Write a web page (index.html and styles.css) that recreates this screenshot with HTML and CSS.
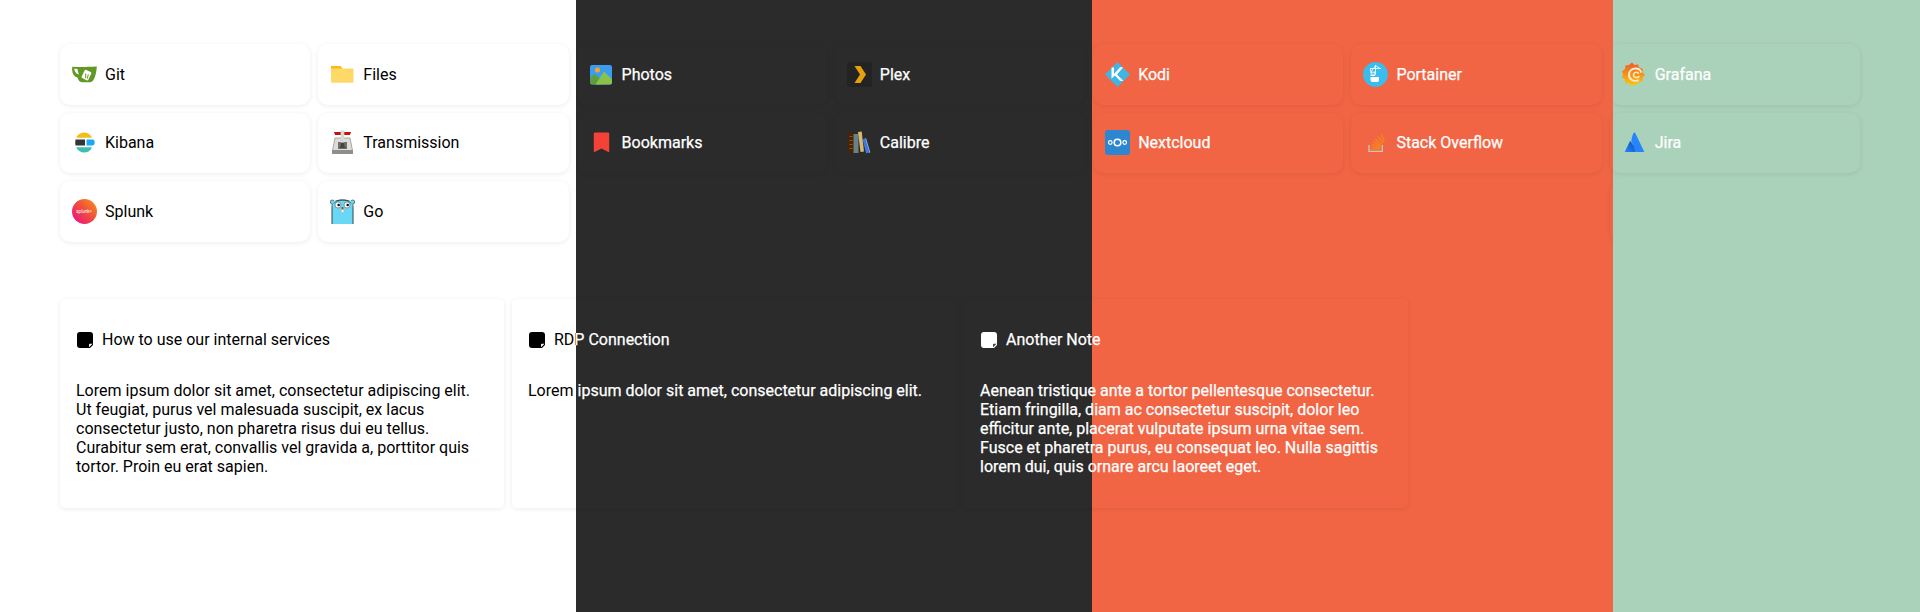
FILE: index.html
```html
<!DOCTYPE html>
<html lang="en">
<head>
<meta charset="utf-8">
<title>Dashboard themes</title>
<link rel="stylesheet" href="styles.css">
</head>
<body>
<main class="stripes">

<section class="stripe stripe-light">
  <div class="sheet">
    <div class="apps">
      <a class="app col-1"><svg class="app-icon" viewBox="0 0 25 25"><path fill="#609926" d="M.3 4.700c6 .5 13 .4 24.400-.1.300 0-.5 10.900-4 14.300-.9.900-2 1.300-3.300 1.300h-7c-2 0-3.400-1-4.300-2.900-.3-.6-.5-1.100-.7-1.700C2.500 14.700.5 12.500.2 8.500.1 7.100.1 5.600.3 4.700z"/><path fill="#fff" d="M2.200 6.700c1.200 0 2.300.1 3.300.2.300 2 .8 4 1.400 5.700C4.500 12 2.700 9.800 2.200 6.700z"/><path fill="#fff" d="m14.300 8 4.300 2.100c.7.300.9 1 .6 1.600l-2.900 6c-.3.600-1 .9-1.700.5L10.300 16c-.6-.3-.9-1-.6-1.600l2.900-5.900c.3-.6 1-.8 1.700-.5z"/><path fill="#609926" d="M13.200 11.500h1v4.800h-1zm2.600.8h1l-.9 4.300h-1z"/></svg><span>Git</span></a>
      <a class="app"><svg class="app-icon" viewBox="0 0 25 25"><path fill="#ffb912" d="M1 4h9.500L12 5.700v2H1z"/><path fill="#ffd968" d="M1 6.500h22.500v13.700a.6.600 0 0 1-.5.500H1.500a.6.600 0 0 1-.5-.5z"/></svg><span>Files</span></a>
      <a class="app col-1"><svg class="app-icon" viewBox="0 0 25 25"><path fill="#f0bf1a" d="M4.200 7.800C5.500 4.600 8.500 2.500 12.300 2.500c3 0 5.800 1.600 7.300 4.300.2.400.1 1-.5 1z"/><path fill="#353535" d="M3.500 9.500H13v6H3.500C3.100 13.500 3.100 11.500 3.500 9.500z"/><path fill="#3ebeb0" d="M4.200 17.200h15c.6 0 .7.500.5 1-1.500 2.700-4.300 4.300-7.400 4.300-3.800 0-6.800-2.100-8.100-5.300z"/><path fill="#1ba9f5" d="M14.500 9.500h6c1.300 0 2.200 1.300 2.200 3s-.9 3-2.200 3h-6z"/></svg><span>Kibana</span></a>
      <a class="app"><svg class="app-icon" viewBox="0 0 25 25"><path fill="#dcdcd8" stroke="#8b8b86" stroke-width=".7" d="M5 8h15l2.500 12.500h-20z"/><path fill="#8e8e8a" d="M2 20h21v4H2z"/><path fill="#707070" d="M8 12h9v7H8z"/><path fill="#d8d8d5" d="M10.700.5h3.600v12h-3.600z"/><path fill="#454543" d="M10.700 13h3.600v3l1.500 2h-6.600l1.500-2z"/><path fill="#c8110f" d="M4 2h6.700v3H5zM14.300 2H21l-1 3h-5.700z"/></svg><span>Transmission</span></a>
      <a class="app col-1"><svg class="app-icon" viewBox="0 0 25 25"><defs><linearGradient id="splunk-fill" x1="0" y1="1" x2="1" y2="0"><stop offset="0" stop-color="#ec0a8c"/><stop offset=".55" stop-color="#f1503a"/><stop offset="1" stop-color="#f8981d"/></linearGradient></defs><circle cx="12.500" cy="12.500" r="12.500" fill="url(#splunk-fill)"/><text x="4.300" y="14" class="splunk-word">splunk&gt;</text></svg><span>Splunk</span></a>
      <a class="app"><svg class="app-icon" viewBox="0 0 25 25"><path fill="#6ad7f5" stroke="#39474f" d="M2 25V7.500C2 3.200 5.500 1 12.500 1S23 3.200 23 7.500V25"/><circle cx="2.300" cy="3" r="2" fill="#6ad7f5" stroke="#39474f" stroke-width=".7"/><circle cx="22.700" cy="3" r="2" fill="#6ad7f5" stroke="#39474f" stroke-width=".7"/><path fill="#6ad7f5" d="M2.500 2h20v5h-20z"/><path fill="none" stroke="#39474f" stroke-width=".7" d="M3.600 4.400C6 2 9 1 12.500 1s6.500 1 8.900 3.400"/><circle cx="8" cy="6" r="3" fill="#fff" stroke="#39474f" stroke-width=".5"/><circle cx="17" cy="6" r="3" fill="#fff" stroke="#39474f" stroke-width=".5"/><circle cx="8.700" cy="6" r="1.300" fill="#111"/><circle cx="17.700" cy="6" r="1.300" fill="#111"/><ellipse cx="12.500" cy="9.800" rx="2.200" ry="1.300" fill="#d9b48f"/><ellipse cx="12.500" cy="9" rx="1" ry=".7" fill="#222"/><path fill="#fff" stroke="#888" stroke-width=".3" d="M11.200 11h2.600v2.500h-2.600z"/></svg><span>Go</span></a>
    </div>
    <div class="notes">
      <article class="note col-1">
        <h3 class="note-title"><svg class="note-icon" viewBox="0 0 16 16"><path fill="currentColor" d="M3 0h10a3 3 0 0 1 3 3v10l-3 3H3a3 3 0 0 1-3-3V3a3 3 0 0 1 3-3z"/><path class="fold-light" d="M15.500 11.800 12 15.200v-2.400a1 1 0 0 1 1-1z"/></svg><span>How to use our internal services</span></h3>
        <p class="note-body">Lorem ipsum dolor sit amet, consectetur adipiscing elit. Ut feugiat, purus vel malesuada suscipit, ex lacus consectetur justo, non pharetra risus dui eu tellus. Curabitur sem erat, convallis vel gravida a, porttitor quis tortor. Proin eu erat sapien.</p>
      </article>
      <article class="note">
        <h3 class="note-title"><svg class="note-icon" viewBox="0 0 16 16"><path fill="currentColor" d="M3 0h10a3 3 0 0 1 3 3v10l-3 3H3a3 3 0 0 1-3-3V3a3 3 0 0 1 3-3z"/><path class="fold-light" d="M15.500 11.800 12 15.200v-2.400a1 1 0 0 1 1-1z"/></svg><span>RDP Connection</span></h3>
        <p class="note-body">Lorem ipsum dolor sit amet, consectetur adipiscing elit.</p>
      </article>
    </div>
  </div>
</section>

<section class="stripe stripe-dark">
  <div class="sheet">
    <div class="apps">
      <a class="app col-3"><svg class="app-icon" viewBox="0 0 25 25"><rect x="1" y="3" width="22" height="19.500" rx="2" fill="#3d9cf0"/><circle cx="8.500" cy="8" r="2.500" fill="#f5a623"/><path fill="#5e9e3e" d="M1 20.500v-4.500l4.500-4 5 4 2 6.500H3a2 2 0 0 1-2-2z"/><path fill="#8bc34a" d="M6.500 22.500 15 9.500 23 17.500v3a2 2 0 0 1-2 2z"/></svg><span>Photos</span></a>
      <a class="app"><svg class="app-icon" viewBox="0 0 25 25"><rect width="25" height="25" rx="3" fill="#232323"/><path fill="#e5a00d" d="M7.500 4h6l5.500 8.500L13.500 21h-6l5.500-8.500z"/></svg><span>Plex</span></a>
      <a class="app col-3"><svg class="app-icon" viewBox="0 0 25 25"><path fill="#f44336" d="M5.800 2.500h13.400a1 1 0 0 1 1 1v18c0 .6-.4.700-.9.400l-6.800-3.400-6.800 3.400c-.5.300-.9.200-.9-.4v-18a1 1 0 0 1 1-1z"/></svg><span>Bookmarks</span></a>
      <a class="app"><svg class="app-icon" viewBox="0 0 25 25"><path fill="#4a2306" d="M1 2.500h6v20.500H1z"/><path fill="#9a6a2c" d="M2.500 6h3v.8h-3zm0 4h3v.8h-3zm0 4h3v.8h-3zm0 4h3v.8h-3z"/><path fill="#6b8188" d="M6.500 4h5v19h-5z"/><path fill="#d9b971" d="m11 2 3.700-.5L17 21.500l-3.500.5z"/><path fill="#3b79e8" d="m15.500 9.500 2.300-1L22 22.500l-2.800 1z"/><path fill="#8ab2f5" d="m18 8.500 1-.5 4.300 14.500-1 .5z"/></svg><span>Calibre</span></a>
    </div>
    <div class="notes">
      <article class="note col-2">
        <h3 class="note-title"><svg class="note-icon" viewBox="0 0 16 16"><path fill="currentColor" d="M3 0h10a3 3 0 0 1 3 3v10l-3 3H3a3 3 0 0 1-3-3V3a3 3 0 0 1 3-3z"/><path class="fold-dark" d="M15.500 11.800 12 15.200v-2.400a1 1 0 0 1 1-1z"/></svg><span>RDP Connection</span></h3>
        <p class="note-body">Lorem ipsum dolor sit amet, consectetur adipiscing elit.</p>
      </article>
      <article class="note">
        <h3 class="note-title"><svg class="note-icon" viewBox="0 0 16 16"><path fill="currentColor" d="M3 0h10a3 3 0 0 1 3 3v10l-3 3H3a3 3 0 0 1-3-3V3a3 3 0 0 1 3-3z"/><path class="fold-dark" d="M15.500 11.800 12 15.200v-2.400a1 1 0 0 1 1-1z"/></svg><span>Another Note</span></h3>
        <p class="note-body">Aenean tristique ante a tortor pellentesque consectetur. Etiam fringilla, diam ac consectetur suscipit, dolor leo efficitur ante, placerat vulputate ipsum urna vitae sem. Fusce et pharetra purus, eu consequat leo. Nulla sagittis lorem dui, quis ornare arcu laoreet eget.</p>
      </article>
    </div>
  </div>
</section>

<section class="stripe stripe-orange">
  <div class="sheet">
    <div class="apps">
      <a class="app col-5"><svg class="app-icon" viewBox="0 0 25 25"><path fill="#3fb5e4" d="M12.500 0 25 12.500 12.500 25 0 12.500z"/><path fill="#fff" d="M6.500 5.500h2.500v6.500l6-6.800h3.200L12 12.500l6.500 6.500h-3.300L9.800 13.500l-3.300 3.300z"/></svg><span>Kodi</span></a>
      <a class="app"><svg class="app-icon" viewBox="0 0 25 25"><circle cx="12.500" cy="12.500" r="12.500" fill="#3bbced"/><path fill="none" stroke="#fff" stroke-width=".8" d="M12.500 3v10M7 6.500h11M8 10l4.500-6.500L17 6.500M7.500 6.500v3"/><path fill="#fff" d="M7.500 9.500h2v2h-2zm3 0h1.500v2H10.500zM7.500 12.500h4.500v1.500H7.500zM7.500 15h8a1 1 0 0 1 .5 1v2.500a2 2 0 0 1-2 1.500h-4.500a2 2 0 0 1-2-2z"/></svg><span>Portainer</span></a>
      <a class="app col-5"><svg class="app-icon" viewBox="0 0 25 25"><rect width="25" height="25" rx="3" fill="#2d86d0"/><g fill="none" stroke="#fff"><circle cx="12.500" cy="12.500" r="3.300" stroke-width="1.600"/><circle cx="5.300" cy="12.500" r="1.800" stroke-width="1.200"/><circle cx="19.700" cy="12.500" r="1.800" stroke-width="1.200"/></g></svg><span>Nextcloud</span></a>
      <a class="app"><svg class="app-icon" viewBox="0 0 25 25"><path fill="none" stroke="#c9c5c2" stroke-width="1.300" d="M6 15v6.300h13.300V15"/><path fill="none" stroke="#f48024" stroke-width="1.600" d="M8 19.300h9M8.300 17l9 .8M8.800 14.400l8.800 2.200M10 11.800l8 3.600M12 9l7 5.300M15 6.300l5.400 6.500M18.200 4l3 7.500"/></svg><span>Stack Overflow</span></a>
      <div class="app col-7"></div>
      <div class="app col-7"></div>
    </div>
    <div class="notes">
      <article class="note col-3">
        <h3 class="note-title"><svg class="note-icon" viewBox="0 0 16 16"><path fill="currentColor" d="M3 0h10a3 3 0 0 1 3 3v10l-3 3H3a3 3 0 0 1-3-3V3a3 3 0 0 1 3-3z"/><path class="fold-dark" d="M15.500 11.800 12 15.200v-2.400a1 1 0 0 1 1-1z"/></svg><span>Another Note</span></h3>
        <p class="note-body">Aenean tristique ante a tortor pellentesque consectetur. Etiam fringilla, diam ac consectetur suscipit, dolor leo efficitur ante, placerat vulputate ipsum urna vitae sem. Fusce et pharetra purus, eu consequat leo. Nulla sagittis lorem dui, quis ornare arcu laoreet eget.</p>
      </article>
    </div>
  </div>
</section>

<section class="stripe stripe-green">
  <div class="sheet">
    <div class="apps">
      <a class="app col-7"><svg class="app-icon" viewBox="0 0 25 25"><defs><linearGradient id="grafana-fill" x1="0" y1="0" x2="0" y2="1"><stop offset="0" stop-color="#f05a28"/><stop offset="1" stop-color="#fbca0a"/></linearGradient></defs><path fill="url(#grafana-fill)" d="M10 .5l2.500 2.500 3.500-.5 1.200 3 3.600 1.500-.3 3.300 2.500 2.700-2.300 2.300-.2 4-3.600.7-1.400 3-3.500-.8-2.500 1.800-2.500-2.500-3.500-.3-.5-3.600L0 15.500l1-3.500L0 9.500l3-2.500.5-3.500 3.500-.5z"/><path fill="none" stroke="#fbe9d0" stroke-width="1.900" stroke-linecap="round" d="M16 18.300c-4.500 1.800-9-.8-9-5.300s3.500-6.500 6.500-6.500 5 1.500 5.500 3.500"/><path fill="none" stroke="#fbe9d0" stroke-width="1.500" stroke-linecap="round" d="M17 14.500c-1 1.500-5.500 1.500-5.500-1.500s3.500-3.500 5-1.800"/></svg><span>Grafana</span></a>
      <a class="app col-7"><svg class="app-icon" viewBox="0 0 25 25"><defs><linearGradient id="jira-left" x1="1" y1="0" x2="0" y2="1"><stop offset="0" stop-color="#0a4fb5"/><stop offset="1" stop-color="#2684ff"/></linearGradient></defs><path fill="#2684ff" d="M12.200 2.500c.6 0 1 .4 1.300 1L22.300 22h-8.800L9.300 11c.3-3 1.300-6 2.100-7.800.2-.4.500-.7.800-.7z"/><path fill="url(#jira-left)" d="M7.800 11.500c.4-.4.900-.3 1.200.2l3 5 1.500 5.300H2.700z"/></svg><span>Jira</span></a>
    </div>
  </div>
</section>

</main>
</body>
</html>
```

FILE: styles.css
```css
* {
  box-sizing: border-box;
}

html,
body {
  margin: 0;
  height: 100%;
  overflow: hidden;
}

body {
  font-family: Roboto, "Liberation Sans", sans-serif;
  font-size: 16px;
}

.stripes {
  display: flex;
  width: 1920px;
  height: 612px;
}

.stripe {
  flex: none;
  height: 100%;
  overflow: hidden;
  color: #fff;
  -webkit-text-stroke: 0.25px currentColor;
}

.stripe-light {
  width: 576px;
  background: #fff;
  color: #000;
  -webkit-text-stroke: 0;
}

.stripe-dark {
  width: 516px;
  background: #2b2b2b;
}

.stripe-orange {
  width: 521px;
  background: #f16544;
}

.stripe-green {
  width: 307px;
  background: #aad1b9;
}

.sheet {
  width: 1920px;
  padding: 44px 60px 0;
}

.stripe-dark .sheet {
  margin-left: -576px;
}

.stripe-orange .sheet {
  margin-left: -1092px;
}

.stripe-green .sheet {
  margin-left: -1613px;
}

.apps {
  display: grid;
  grid-template-columns: repeat(7, 1fr);
  grid-template-rows: repeat(3, 60.5px);
  gap: 8px;
}

.app {
  display: flex;
  align-items: center;
  gap: 8px;
  padding: 0 12px;
  border-radius: 10px;
  box-shadow: 0 1px 5px rgba(0, 0, 0, 0.08);
  color: inherit;
}

.app-icon {
  flex: none;
  width: 25px;
  height: 25px;
}

.splunk-word {
  font-size: 4.500px;
  fill: #fff;
  -webkit-text-stroke: 0;
}

.notes {
  display: grid;
  grid-template-columns: repeat(4, 1fr);
  gap: 8px;
  margin-top: 57px;
}

.note {
  padding: 16px 16px 32px;
  border-radius: 5px;
  box-shadow: 0 1px 5px rgba(0, 0, 0, 0.08);
}

.note-title {
  display: flex;
  align-items: center;
  gap: 9px;
  height: 50px;
  margin: 0 0 16.5px 1px;
  font-size: 16px;
  font-weight: 400;
}

.note-icon {
  flex: none;
  width: 16px;
  height: 16px;
}

.fold-light {
  fill: #fff;
}

.fold-dark {
  fill: #3a3a3a;
}

.note-body {
  margin: 0;
  font-size: 16px;
  line-height: 19px;
}

.col-1 { grid-column: 1; }
.col-2 { grid-column: 2; }
.col-3 { grid-column: 3; }
.col-5 { grid-column: 5; }
.col-7 { grid-column: 7; }
```
